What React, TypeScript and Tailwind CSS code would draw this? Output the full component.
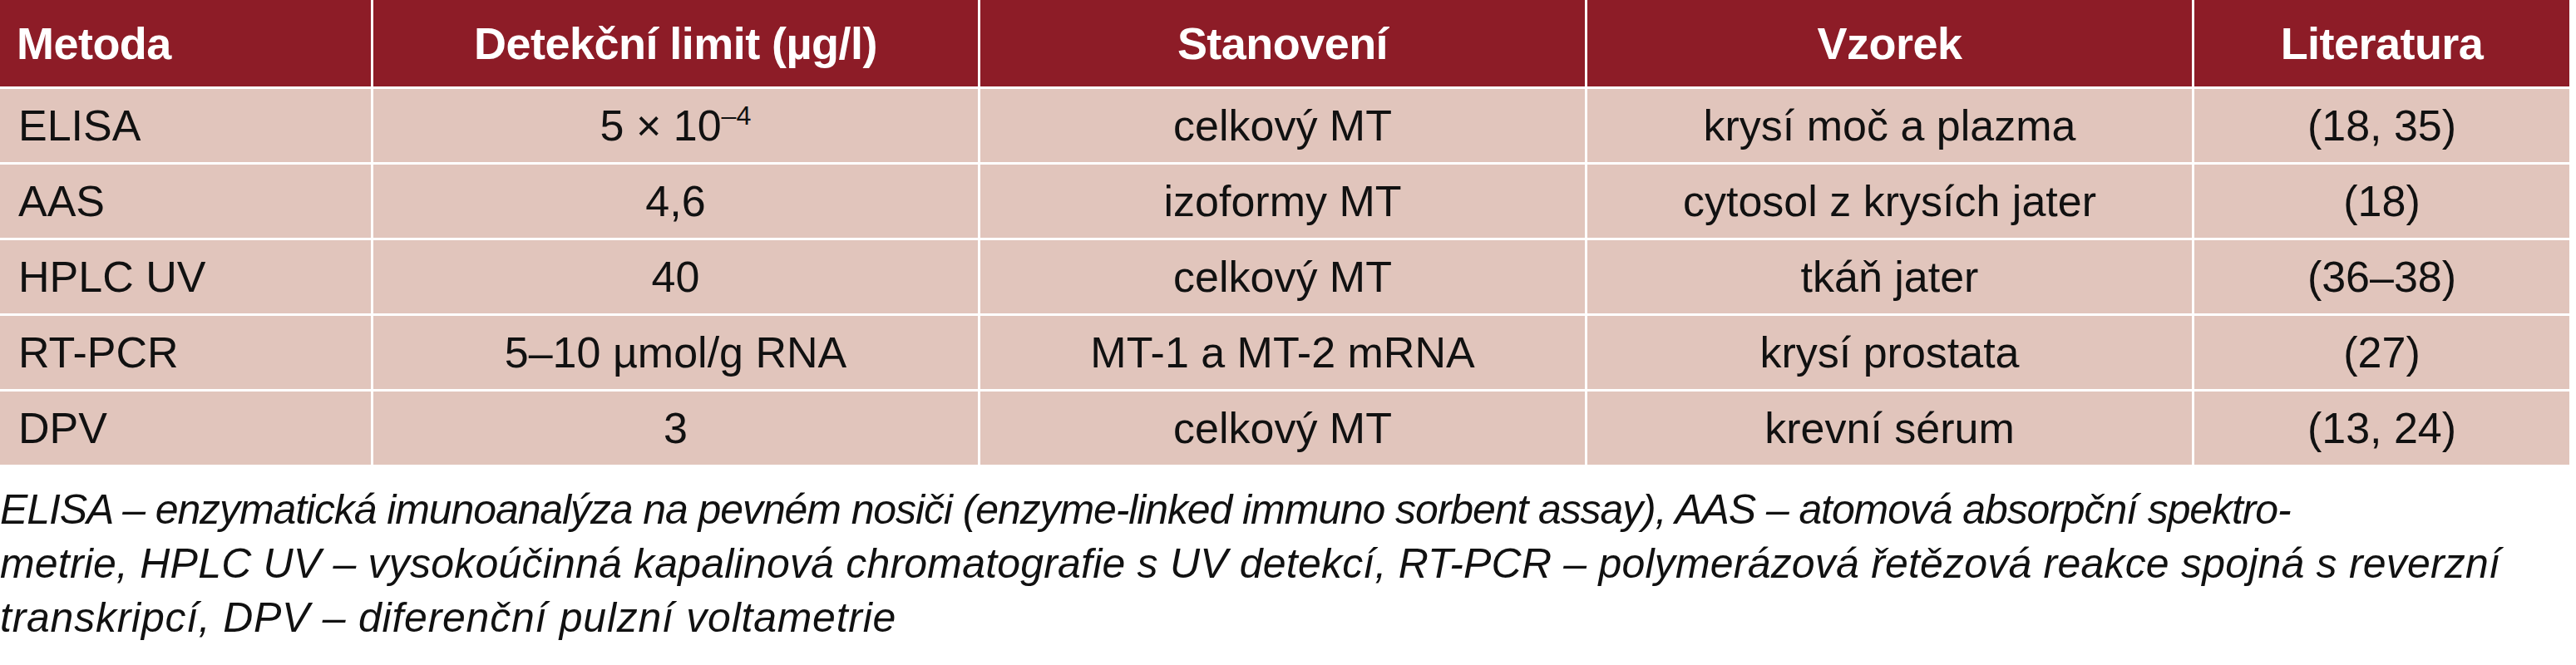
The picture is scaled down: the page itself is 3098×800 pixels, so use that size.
import React from "react";

const rows: [string, React.ReactNode, string, string, string][] = [
  ["ELISA", <>5 × 10<sup className="text-[62%] -top-[0.6em]">–4</sup></>, "celkový MT", "krysí moč a plazma", "(18, 35)"],
  ["AAS", "4,6", "izoformy MT", "cytosol z krysích jater", "(18)"],
  ["HPLC UV", "40", "celkový MT", "tkáň jater", "(36–38)"],
  ["RT-PCR", "5–10 µmol/g RNA", "MT-1 a MT-2 mRNA", "krysí prostata", "(27)"],
  ["DPV", "3", "celkový MT", "krevní sérum", "(13, 24)"],
];

const headers = ["Detekční limit (µg/l)", "Stanovení", "Vzorek", "Literatura"];

export default function App() {
  return (
    <div className="w-[3098px] h-[800px] bg-white overflow-hidden" style={{ fontFamily: '"Liberation Sans", Arial, sans-serif' }}>
      <div className="w-[3090px] grid grid-cols-[446px_727px_727px_727px_451px] grid-rows-[104px_88px_88px_88px_88px_88px] gap-[3px] bg-white">
        <div className="bg-[#8d1c27] text-white font-bold text-[54px] tracking-[-0.01em] flex items-center pl-[20px] leading-none">Metoda</div>
        {headers.map((h) => (
          <div key={h} className="bg-[#8d1c27] text-white font-bold text-[54px] tracking-[-0.01em] flex items-center justify-center leading-none">
            {h}
          </div>
        ))}
        {rows.map((r, i) => (
          <React.Fragment key={i}>
            <div className="bg-[#e1c5bc] text-[#111] text-[52px] flex items-center pl-[22px] leading-none">{r[0]}</div>
            {r.slice(1).map((c, j) => (
              <div key={j} className="bg-[#e1c5bc] text-[#111] text-[52px] flex items-center justify-center leading-none">
                <span>{c}</span>
              </div>
            ))}
          </React.Fragment>
        ))}
      </div>
      <div className="mt-[22px] italic text-[#111] text-[50px] leading-[65px]">
        <div className="whitespace-nowrap tracking-[-0.022em]">ELISA – enzymatická imunoanalýza na pevném nosiči (enzyme-linked immuno sorbent assay), AAS – atomová absorpční spektro-</div>
        <div className="whitespace-nowrap tracking-[0.004em]">metrie, HPLC UV – vysokoúčinná kapalinová chromatografie s UV detekcí, RT-PCR – polymerázová řetězová reakce spojná s reverzní</div>
        <div className="whitespace-nowrap tracking-[0.015em]">transkripcí, DPV – diferenční pulzní voltametrie</div>
      </div>
    </div>
  );
}
